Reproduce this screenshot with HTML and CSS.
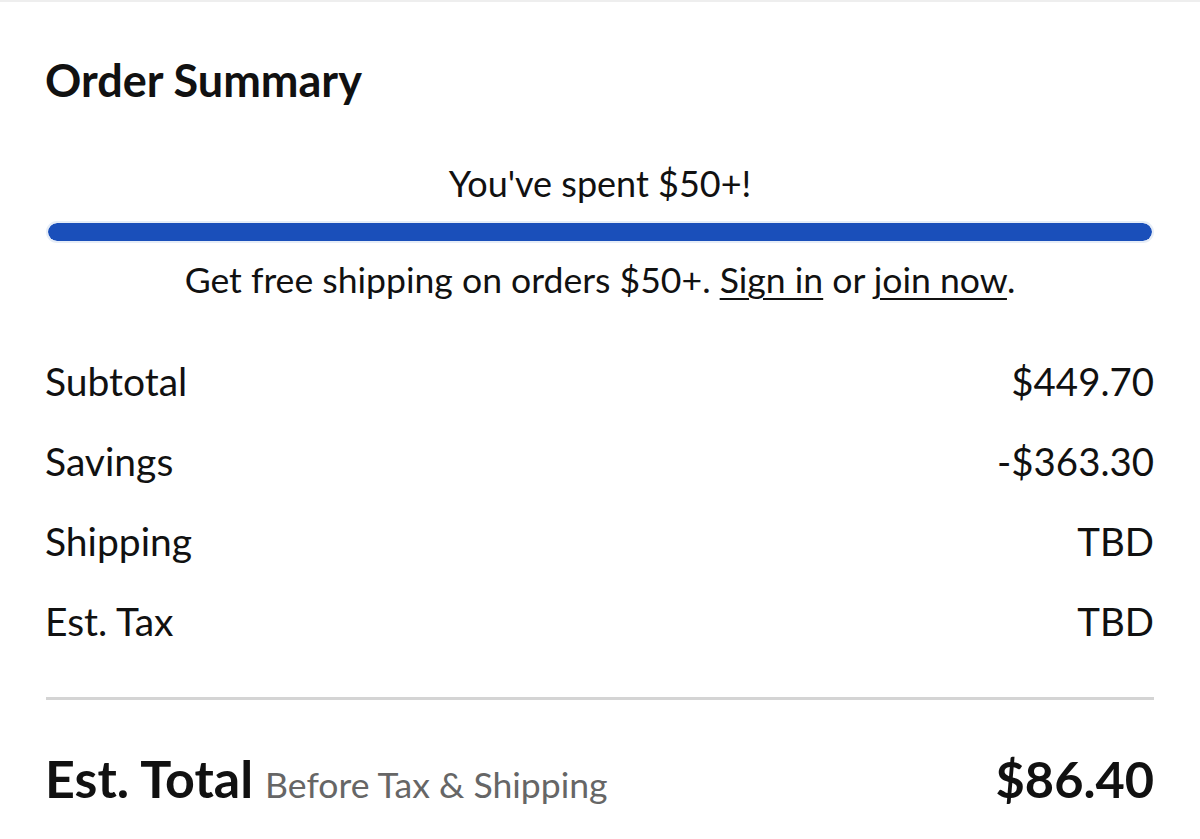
FILE: index.html
```html
<!DOCTYPE html>
<html lang="en">
<head>
<meta charset="utf-8">
<title>Order Summary</title>
<link rel="stylesheet" href="styles.css">
</head>
<body>
<main class="summary">
  <h1 class="title">Order Summary</h1>
  <section class="promo">
    <p class="promo-head">You've spent $50+!</p>
    <div class="track"><div class="fill" style="width:100%"></div></div>
    <p class="promo-note">Get free shipping on orders $50+. <a href="#">Sign in</a> or <a href="#">join now</a>.</p>
  </section>
  <dl class="lines">
    <div class="line"><dt>Subtotal</dt><dd>$449.70</dd></div>
    <div class="line"><dt>Savings</dt><dd>-$363.30</dd></div>
    <div class="line"><dt>Shipping</dt><dd>TBD</dd></div>
    <div class="line"><dt>Est. Tax</dt><dd>TBD</dd></div>
  </dl>
  <hr class="divider">
  <div class="total">
    <div class="total-label"><strong>Est. Total</strong><span class="total-sub">Before Tax &amp; Shipping</span></div>
    <div class="total-value">$86.40</div>
  </div>
</main>
</body>
</html>
```
FILE: styles.css
```css
html, body {
  margin: 0;
  padding: 0;
  background: #ffffff;
}
body {
  font-family: Lato, "Open Sans", sans-serif;
  color: #111111;
  border-top: 2px solid #eeeeee;
}
.summary {
  padding: 52px 46px 0 46px;
}
.title {
  margin: 0 0 0 -1px;
  font-size: 45px;
  line-height: 52px;
  font-weight: 700;
}
.promo {
  margin-top: 55px;
  text-align: center;
}
.promo-head {
  margin: 0;
  font-size: 36px;
  line-height: 44px;
}
.track {
  margin-top: 16px;
  height: 18px;
  border: 2px solid #e6edf7;
  border-radius: 12px;
  background: #e6edf7;
  overflow: hidden;
}
.fill {
  height: 100%;
  background: #1a4fba;
  border-radius: 10px;
}
.promo-note {
  margin: 15px 0 0 0;
  font-size: 35.6px;
  line-height: 44px;
}
.promo-note a {
  color: #111111;
  text-decoration: underline;
  text-decoration-thickness: 2px;
  text-underline-offset: 5px;
}
.lines {
  margin: 39px 0 0 -1px;
}
.line {
  display: flex;
  justify-content: space-between;
  font-size: 39px;
  line-height: 80px;
}
.line dt, .line dd {
  margin: 0;
}
.line dd {
  font-size: 38.4px;
}
.divider {
  margin: 36px 0 0 0;
  border: 0;
  height: 3px;
  background: #d4d4d4;
}
.total {
  margin-top: 48px;
  display: flex;
  justify-content: space-between;
  align-items: baseline;
  line-height: 60px;
}
.total-label {
  margin-left: -1px;
}
.total-label strong {
  font-size: 52px;
  font-weight: 700;
}
.total-sub {
  margin-left: 12px;
  font-size: 35.6px;
  color: #666666;
}
.total-value {
  font-size: 50.5px;
  font-weight: 700;
}
```
